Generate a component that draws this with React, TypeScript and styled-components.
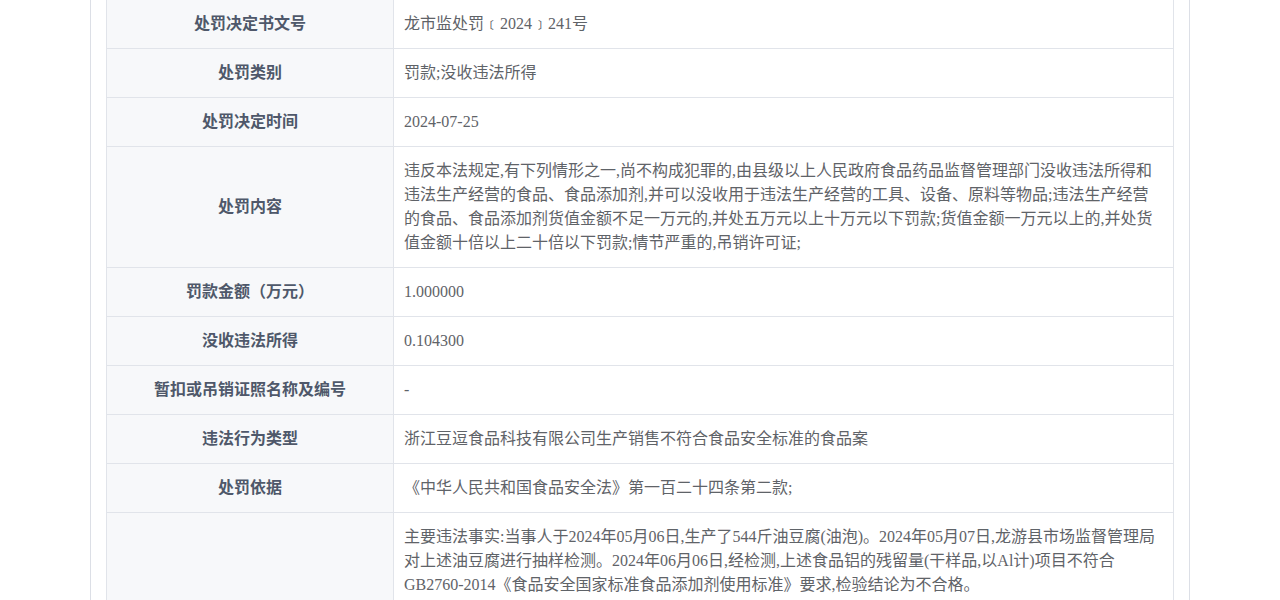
import React from "react";
import styled, { createGlobalStyle } from "styled-components";

const GlobalStyle = createGlobalStyle`
  html, body {
    margin: 0;
    padding: 0;
    background: #ffffff;
  }
  body {
    font-family: "Liberation Serif", "Noto Sans CJK SC", serif;
    font-size: 16px;
  }
`;

const Page = styled.div`
  width: 1100px;
  margin: 0 auto;
  box-sizing: border-box;
  border-left: 1px solid #dcdfe6;
  border-right: 1px solid #dcdfe6;
  padding: 0 15px 20px;
  background: #ffffff;
`;

const Table = styled.div`
  border-left: 1px solid #e1e4ea;
  border-right: 1px solid #e1e4ea;
`;

const Row = styled.div`
  display: grid;
  grid-template-columns: 287px 1fr;
  border-bottom: 1px solid #e1e4ea;
`;

const Label = styled.div`
  box-sizing: border-box;
  display: flex;
  align-items: center;
  justify-content: center;
  text-align: center;
  background: #f7f8fa;
  border-right: 1px solid #e1e4ea;
  padding: 12px 10px;
  font-family: "Liberation Serif", "Noto Sans CJK SC", serif;
  font-weight: 700;
  font-size: 16px;
  line-height: 24px;
  color: #4f586a;
`;

const Value = styled.div`
  box-sizing: border-box;
  padding: 12px 10px;
  font-family: "Liberation Serif", "Noto Sans CJK SC", serif;
  font-size: 16px;
  line-height: 24px;
  color: #5f6368;
  white-space: pre-line;
  overflow-wrap: break-word;
`;

const rows: { label: string; value: string }[] = [
  { label: "处罚决定书文号", value: "龙市监处罚﹝2024﹞241号" },
  { label: "处罚类别", value: "罚款;没收违法所得" },
  { label: "处罚决定时间", value: "2024-07-25" },
  {
    label: "处罚内容",
    value:
      "违反本法规定,有下列情形之一,尚不构成犯罪的,由县级以上人民政府食品药品监督管理部门没收违法所得和违法生产经营的食品、食品添加剂,并可以没收用于违法生产经营的工具、设备、原料等物品;违法生产经营的食品、食品添加剂货值金额不足一万元的,并处五万元以上十万元以下罚款;货值金额一万元以上的,并处货值金额十倍以上二十倍以下罚款;情节严重的,吊销许可证;",
  },
  { label: "罚款金额（万元）", value: "1.000000" },
  { label: "没收违法所得", value: "0.104300" },
  { label: "暂扣或吊销证照名称及编号", value: "-" },
  { label: "违法行为类型", value: "浙江豆逗食品科技有限公司生产销售不符合食品安全标准的食品案" },
  { label: "处罚依据", value: "《中华人民共和国食品安全法》第一百二十四条第二款;" },
  {
    label: "主要违法事实",
    value:
      "主要违法事实:当事人于2024年05月06日,生产了544斤油豆腐(油泡)。2024年05月07日,龙游县市场监督管理局对上述油豆腐进行抽样检测。2024年06月06日,经检测,上述食品铝的残留量(干样品,以Al计)项目不符合GB2760-2014《食品安全国家标准食品添加剂使用标准》要求,检验结论为不合格。\n\n" +
      "2024年06月13日,龙游县市场监督管理局将检验结果送达当事人,当事人未提出复检申请。经查,当事人生产的上述油豆腐(油泡)货值金额为1043元,违法所得为1043元。\n\n" +
      "以上事实有现场检查笔录、询问调查笔录、检验报告、当事人营业执照复印件、食品生产许可证复印件、销售记录等证据证实,事实清楚,证据确凿。",
  },
];

export default function App() {
  return (
    <>
      <GlobalStyle />
      <Page>
        <Table>
          {rows.map((r) => (
            <Row key={r.label}>
              <Label>{r.label}</Label>
              <Value>{r.value}</Value>
            </Row>
          ))}
        </Table>
      </Page>
    </>
  );
}
